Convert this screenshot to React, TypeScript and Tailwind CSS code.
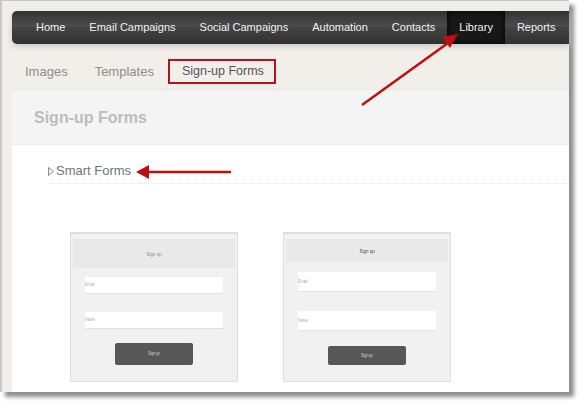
import React from 'react';

const NAV_ITEMS = ['Home', 'Email Campaigns', 'Social Campaigns', 'Automation', 'Contacts', 'Library', 'Reports'];

type FormThumbProps = {
  headerClass: string;
  inputClass: string;
  gapClass: string;
  buttonClass: string;
  titleClass: string;
};

function FormThumb({ headerClass, inputClass, gapClass, buttonClass, titleClass }: FormThumbProps) {
  return (
    <div className="w-[168px] h-[150px] bg-[#f1f1f1] border-t-2 border-b border-x border-[#dedede] px-[2px] pt-[5px] blur-[0.4px]">
      <div className={`bg-[#e9e9e9] flex items-center justify-center ${headerClass}`}>
        <span className={`text-[6px] leading-none scale-x-75 ${titleClass}`}>Sign up</span>
      </div>
      <div className={`flex flex-col px-[12px] ${gapClass}`}>
        <div className={`bg-white border-b border-[#e2e2e2] flex items-center text-[5px] text-[#aaaaaa] ${inputClass}`}>
          <span className="scale-x-75 origin-left">Email</span>
        </div>
        <div className={`bg-white border-b border-[#e2e2e2] flex items-center text-[5px] text-[#aaaaaa] ${inputClass}`}>
          <span className="scale-x-75 origin-left">Name</span>
        </div>
      </div>
      <div className={`mx-auto w-[78px] bg-[#575757] rounded-[2px] flex items-center justify-center text-[5px] text-[#cfcfcf] ${buttonClass}`}>
        <span className="scale-x-75">Signup</span>
      </div>
    </div>
  );
}

export default function App() {
  return (
    <div className="relative w-[584px] h-[408px] bg-white overflow-hidden font-['Liberation_Sans',Arial,sans-serif]">
      <div className="w-[569px] h-[392px] bg-[#f2efea] border-t-[1px] border-l-[2px] border-[#c8c8c8] shadow-[5px_5px_4px_#8f8f8f] flex flex-col">
        {/* top nav */}
        <div className="ml-[10px] mt-[10px] h-[33px] flex pl-[12px] rounded-l-[5px] bg-[linear-gradient(#333333_0%,#4c4c4c_46%,#434343_50%,#313131_100%)] shadow-[0_3px_6px_#cfccc7] shrink-0">
          {NAV_ITEMS.map((item) => (
            <div
              key={item}
              className={`h-full px-[12px] flex items-center whitespace-nowrap text-[11px] text-[#f2f2f2] ${item === 'Library' ? 'bg-[#181818] shadow-[inset_0_0_6px_#000]' : ''}`}
            >
              {item}
            </div>
          ))}
        </div>

        {/* tabs */}
        <div className="ml-[23px] mt-[15px] h-[25px] flex items-center text-[13px] shrink-0">
          <span className="text-[#8d8d8d]">Images</span>
          <span className="ml-[27px] text-[#8d8d8d]">Templates</span>
          <span className="ml-[14px] h-[25px] w-[108px] border-2 border-[#b5121b] flex items-center pl-[12px] text-[12.5px] text-[#4d5560]">
            Sign-up Forms
          </span>
        </div>

        {/* panel */}
        <div className="ml-[10px] mt-[5px] flex-1 bg-white flex flex-col min-h-0">
          <div className="h-[56px] bg-[#f4f4f4] border-t border-[#e6e6e6] border-b border-b-[#ececec] flex items-center pl-[22px] pt-[1px] shrink-0">
            <span className="text-[16px] font-bold text-[#bdbdbd]">Sign-up Forms</span>
          </div>
          <div className="mt-[17px] ml-[36px] h-[22px] border-b border-dotted border-[#e6e6e6] flex items-start shrink-0">
            <svg width="6" height="9" viewBox="0 0 6 9" className="mt-[5px] mr-[2px]">
              <path d="M0.5 0.5 L5.5 4.5 L0.5 8.5 Z" fill="#f4f4f4" stroke="#8a8a8a" strokeWidth="1" />
            </svg>
            <span className="text-[13px] leading-[17px] text-[#6d747c]">Smart Forms</span>
          </div>
          <div className="ml-[58px] mt-[48px] flex gap-[45px]">
            <FormThumb
              headerClass="h-[29px]"
              titleClass="text-[#8a8a8a]"
              inputClass="h-[17px]"
              gapClass="mt-[9px] gap-[18px]"
              buttonClass="mt-[14px] h-[22px]"
            />
            <FormThumb
              headerClass="h-[23px]"
              titleClass="text-[#444444]"
              inputClass="h-[20px]"
              gapClass="mt-[10px] gap-[19px]"
              buttonClass="mt-[15px] h-[19px]"
            />
          </div>
        </div>
      </div>

      {/* annotation arrows */}
      <svg width="584" height="408" className="absolute inset-0 pointer-events-none">
        <line x1="362" y1="105" x2="448" y2="43" stroke="#c00d0d" strokeWidth="2.5" />
        <polygon points="458,34 450,48 442,37" fill="#c00d0d" />
        <line x1="146" y1="172" x2="231" y2="172" stroke="#c00d0d" strokeWidth="2.5" />
        <polygon points="136,172 149,165 149,179" fill="#c00d0d" />
      </svg>
    </div>
  );
}
